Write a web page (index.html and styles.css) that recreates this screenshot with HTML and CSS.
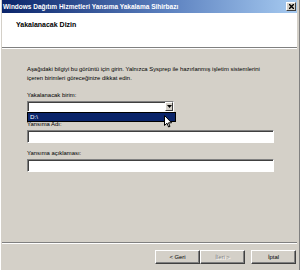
FILE: index.html
```html
<!DOCTYPE html>
<html lang="tr">
<head>
    <meta charset="UTF-8">
    <title>Windows Dağıtım Hizmetleri Yansıma Yakalama Sihirbazı</title>
    <link rel="stylesheet" href="styles.css">
</head>
<body>
    <div class="window">
        <div class="titlebar">
            <span class="title">Windows Dağıtım Hizmetleri Yansıma Yakalama Sihirbazı</span>
            <span class="close">
                <svg width="5" height="5" viewBox="0 0 5 5"><path d="M0 0L5 5M5 0L0 5" stroke="#000" stroke-width="1.4"/></svg>
            </span>
        </div>
        <div class="header">
            <h1>Yakalanacak Dizin</h1>
        </div>
        <div class="content">
            <p class="intro">Aşağıdaki bilgiyi bu görüntü için girin. Yalnızca Sysprep ile hazırlanmış işletim sistemlerini içeren birimleri göreceğinize dikkat edin.</p>

            <div class="field-label">Yakalanacak birim:</div>
            <div class="combo-wrap">
                <div class="combo">
                    <span class="combo-value"></span>
                    <span class="combo-btn">
                        <svg width="5" height="3" viewBox="0 0 5 3"><path d="M0 0H5L2.5 3Z" fill="#000"/></svg>
                    </span>
                </div>
                <div class="combo-list">
                    <div class="combo-item">D:\</div>
                </div>
                <!-- mouse pointer over the open list -->
                <svg class="pointer" width="8" height="13" viewBox="0 0 8 13">
                    <path d="M0.5 0.5V10.5L3 8.2L4.6 12L6 11.4L4.5 7.8H7.6Z" fill="#fff" stroke="#000" stroke-width="1" stroke-linejoin="round"/>
                </svg>
            </div>

            <div class="field-label gap">Yansıma Adı:</div>
            <div class="text-input"></div>

            <div class="field-label gap-sm">Yansıma açıklaması:</div>
            <div class="text-input"></div>
        </div>
        <div class="footer">
            <button class="btn">&lt; Geri</button>
            <button class="btn" disabled>İleri &gt;</button>
            <button class="btn cancel">İptal</button>
        </div>
    </div>
</body>
</html>
```

FILE: styles.css
```css
html, body {
    margin: 0;
    padding: 0;
}

body {
    width: 300px;
    height: 270px;
    overflow: hidden;
    background-color: #d4d0c8;
    font-family: "Liberation Sans", Arial, sans-serif;
}

.window {
    display: flex;
    flex-direction: column;
    height: 270px;
    box-sizing: border-box;
    padding: 0 3px 0 1px;
    background-color: #d4d0c8;
    border-left: 1px solid #ffffff;
    box-shadow: inset -1px 0 0 #808080;
}

.titlebar {
    display: flex;
    align-items: center;
    justify-content: space-between;
    height: 13px;
    padding: 0 1px 0 1px;
    background: linear-gradient(to right, #0a246a 0%, #5a7fbe 55%, #a6caf0 100%);
}

.title {
    color: #ffffff;
    font-weight: bold;
    font-size: 6.5px;
    white-space: nowrap;
}

.close {
    display: flex;
    align-items: center;
    justify-content: center;
    width: 8px;
    height: 7px;
    background-color: #d4d0c8;
    border: 1px solid;
    border-color: #ffffff #404040 #404040 #ffffff;
}

.header {
    height: 34px;
    background-color: #ffffff;
    border-bottom: 1px solid #808080;
    box-shadow: 0 1px 0 #ffffff;
}

.header h1 {
    margin: 0;
    padding: 7px 0 0 14px;
    font-size: 7px;
    font-weight: bold;
    line-height: 9px;
    color: #000;
}

.content {
    flex: 1;
    padding: 17px 0 0 25px;
    font-size: 5.9px;
    color: #000;
}

.intro {
    margin: 0 0 8px 0;
    width: 250px;
    line-height: 9px;
}

.field-label {
    line-height: 9px;
    height: 9px;
}

.field-label.gap {
    margin-top: 8px;
}

.field-label.gap-sm {
    margin-top: 6px;
}

.combo-wrap {
    position: relative;
    width: 147px;
    margin-top: 1px;
}

.combo {
    display: flex;
    height: 11px;
    box-sizing: border-box;
    background-color: #ffffff;
    border: 1px solid;
    border-color: #808080 #ffffff #ffffff #808080;
    box-shadow: inset 1px 1px 0 #404040;
}

.combo-value {
    flex: 1;
}

.combo-btn {
    display: flex;
    align-items: center;
    justify-content: center;
    width: 8px;
    box-sizing: border-box;
    background-color: #d4d0c8;
    border: 1px solid;
    border-color: #ffffff #404040 #404040 #ffffff;
}

.combo-list {
    position: absolute;
    left: 0;
    top: 11px;
    width: 149px;
    height: 10px;
    box-sizing: border-box;
    background-color: #ffffff;
    border: 1px solid #000;
}

.combo-item {
    height: 8px;
    line-height: 8px;
    padding-left: 2px;
    background-color: #0a246a;
    color: #ffffff;
    font-size: 6.2px;
}

.pointer {
    position: absolute;
    left: 137px;
    top: 14px;
}

.text-input {
    width: 247px;
    height: 13px;
    margin-top: 1px;
    box-sizing: border-box;
    background-color: #ffffff;
    border: 1px solid;
    border-color: #808080 #ffffff #ffffff #808080;
    box-shadow: inset 1px 1px 0 #404040;
}

.footer {
    display: flex;
    justify-content: flex-end;
    height: 28px;
    box-sizing: border-box;
    padding: 7px 1px 0 0;
    border-top: 1px solid #808080;
    box-shadow: inset 0 1px 0 #ffffff;
}

.btn {
    width: 45px;
    height: 14px;
    padding: 0;
    box-sizing: border-box;
    font-family: "Liberation Sans", Arial, sans-serif;
    font-size: 5.9px;
    color: #000;
    background-color: #d4d0c8;
    border: 1px solid;
    border-color: #ffffff #404040 #404040 #ffffff;
    box-shadow: inset -1px -1px 0 #808080;
}

.btn:disabled {
    color: #808080;
    text-shadow: 1px 1px 0 #ffffff;
}

.btn.cancel {
    margin-left: 6px;
}
```
